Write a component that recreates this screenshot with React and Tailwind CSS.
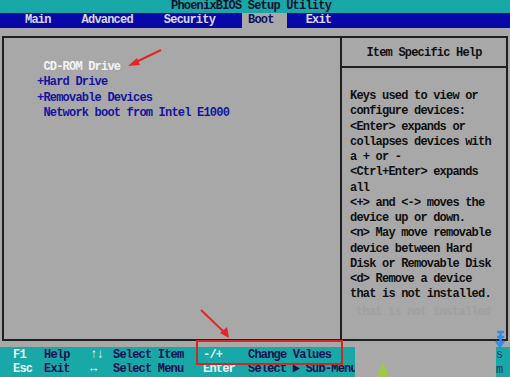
import React from "react";

const FONT = { fontFamily: '"Liberation Mono", "DejaVu Sans Mono", monospace' };
const T = "inline-block leading-[11px] scale-y-[1.12]";

export default function App() {
  const help = [
    "Keys used to view or",
    "configure devices:",
    "<Enter> expands or",
    "collapses devices with",
    "a + or -",
    "<Ctrl+Enter> expands",
    "all",
    "<+> and <-> moves the",
    "device up or down.",
    "<n> May move removable",
    "device between Hard",
    "Disk or Removable Disk",
    "<d> Remove a device",
    "that is not installed.",
  ];
  const L = ({ c, t }) => <span className={`${T} ${c || ""}`}>{t}</span>;
  return (
    <div
      className="relative w-[510px] h-[377px] overflow-hidden bg-[#a8a8a8] text-[12px] font-bold tracking-[-0.8px] whitespace-pre"
      style={FONT}
    >
      {/* title */}
      <div className="h-[13px] bg-[#18a8a8] text-[#101030] leading-[13px] pl-[171px]">
        PhoenixBIOS Setup Utility
      </div>
      {/* menu */}
      <div className="h-[15px] bg-[#0808a8] text-[#d8d8e8] leading-[15px] flex items-center pl-[25px]">
        <L t="Main" />
        <span className="ml-[31px]"><L t="Advanced" /></span>
        <span className="ml-[31px]"><L t="Security" /></span>
        <span className="ml-[27px] pl-[6px] pr-[13px] bg-[#a8a8a8] text-[#101060]"><L t="Boot" /></span>
        <span className="ml-[19px]"><L t="Exit" /></span>
      </div>
      {/* body */}
      <div className="h-[319px] pt-[8px] pl-[2px] pr-[2px]">
        <div className="flex h-[305px] border-2 border-[#202020]">
          <div className="w-[336px] pt-[22px] pl-[33px] leading-[15.3px] text-[#1414a0]">
            <div><L c="text-[#f4f4f4]" t=" CD-ROM Drive" /></div>
            <div><L t="+Hard Drive" /></div>
            <div><L t="+Removable Devices" /></div>
            <div><L t=" Network boot from Intel E1000" /></div>
          </div>
          <div className="flex-1 border-l-2 border-[#202020] flex flex-col">
            <div className="h-[30px] border-b-2 border-[#202020] flex items-center justify-center text-[#101010] pt-[2px]">
              <L t="Item Specific Help" />
            </div>
            <div className="pt-[21px] pl-[8px] leading-[15.25px] text-[#101010]">
              {help.map((l, i) => (
                <div key={i}><L t={l} /></div>
              ))}
            </div>
          </div>
        </div>
      </div>
      {/* footer */}
      <div className="h-[30px] bg-[#18a8a8] leading-[15px] pt-[1px] grid grid-cols-[13px_31px_46px_23px_90px_45px_auto] items-center">
        <span />
        <L c="text-[#eef6f6]" t="F1" />
        <L c="text-[#101050]" t="Help" />
        <L c="text-[#eef6f6]" t="↑↓" />
        <L c="text-[#101050]" t="Select Item" />
        <L c="text-[#eef6f6]" t="-/+" />
        <L c="text-[#101050]" t="Change Values" />
        <span />
        <L c="text-[#eef6f6]" t="Esc" />
        <L c="text-[#101050]" t="Exit" />
        <L c="text-[#eef6f6]" t="↔" />
        <L c="text-[#101050]" t="Select Menu" />
        <L c="text-[#eef6f6]" t="Enter" />
        <L c="text-[#101050]" t="Select ▶ Sub-Menu" />
      </div>

      {/* watermark overlay */}
      <div className="absolute left-[355px] top-[341px] w-[141px] h-[36px] bg-[#aaaaaa]" />
      <div className="absolute left-[356px] top-[303px] text-[#9c9c9c] opacity-60">
        <L t="that is not installed" />
      </div>
      <svg className="absolute left-[375px] top-[362px]" width="16" height="15" viewBox="0 0 16 15">
        <polygon points="8,0 14,15 2,15" fill="#9ccc3c" />
      </svg>
      <div className="absolute left-[496px] top-[348px] text-[#303060] leading-[15px] font-normal">
        <div>s</div>
        <div>m</div>
      </div>
      <svg className="absolute left-[495px] top-[330px]" width="11" height="22" viewBox="0 0 11 22">
        <path d="M2 2 L9 2 M5.5 2 L5.5 14 M2 7 L9 7 M1 11 L5 16 L9 11" stroke="#2a8cf0" strokeWidth="2.5" fill="none" />
      </svg>

      {/* red annotations */}
      <div className="absolute left-[196px] top-[340px] w-[147px] h-[25px] border-2 border-[#d02828]" />
      <svg className="absolute left-0 top-0 pointer-events-none" width="510" height="377">
        <line x1="161" y1="50" x2="134" y2="63" stroke="#e02828" strokeWidth="2" />
        <polygon points="128,66 137,58 140,65" fill="#e02828" />
        <line x1="201" y1="310" x2="224" y2="332" stroke="#e02828" strokeWidth="2" />
        <polygon points="229,338 220,333 227,327" fill="#e02828" />
      </svg>
    </div>
  );
}
